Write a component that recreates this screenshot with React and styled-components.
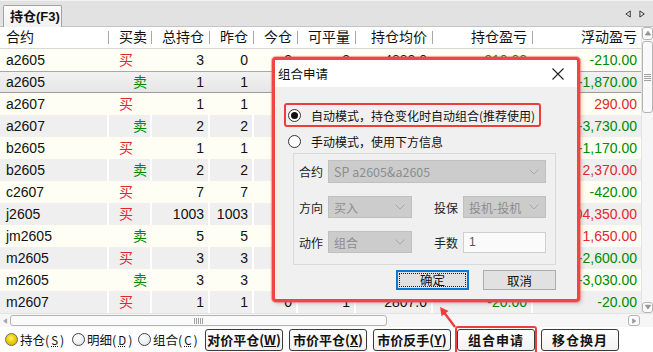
import React from "react";
import styled, { createGlobalStyle } from "styled-components";

const GlobalStyle = createGlobalStyle`
  html, body { margin: 0; padding: 0; background: #fff; }
  body { font-family: "Liberation Sans", "Noto Sans CJK SC", sans-serif; }
  * { box-sizing: border-box; }
`;

const COLS = "109px 43px 58px 44px 44px 58px 77px 100px 108px";
const RED = "#e0282f";
const GREEN = "#008a00";

const columns = [
  { label: "合约", align: "left" },
  { label: "买卖", align: "left" },
  { label: "总持仓", align: "right" },
  { label: "昨仓", align: "right" },
  { label: "今仓", align: "right" },
  { label: "可平量", align: "right" },
  { label: "持仓均价", align: "right" },
  { label: "持仓盈亏", align: "right" },
  { label: "浮动盈亏", align: "right" },
];

// contract, side, total, yesterday, today, closable, avg price, pos P/L, float P/L
const rows = [
  ["a2605", "买", "3", "0", "3", "3", "4880.0", "-210.00", "-210.00"],
  ["a2605", "卖", "1", "1", "0", "1", "4873.0", "-1,870.00", "-1,870.00"],
  ["a2607", "买", "1", "1", "0", "1", "4790.0", "290.00", "290.00"],
  ["a2607", "卖", "2", "2", "0", "2", "4712.0", "-3,730.00", "-3,730.00"],
  ["b2605", "买", "1", "1", "0", "1", "3633.0", "-1,170.00", "-1,170.00"],
  ["b2605", "卖", "2", "2", "0", "2", "3685.0", "2,370.00", "2,370.00"],
  ["c2607", "买", "7", "7", "0", "7", "2286.0", "-420.00", "-420.00"],
  ["j2605", "买", "1003", "1003", "0", "1003", "1744.5", "104,350.00", "104,350.00"],
  ["jm2605", "卖", "5", "5", "0", "5", "1153.0", "1,650.00", "1,650.00"],
  ["m2605", "买", "3", "3", "0", "3", "2972.0", "-2,600.00", "-2,600.00"],
  ["m2605", "卖", "3", "3", "0", "3", "2950.0", "-3,030.00", "-3,030.00"],
  ["m2607", "买", "1", "1", "0", "1", "2807.0", "-20.00", "-20.00"],
];

const Page = styled.div`
  position: relative;
  width: 653px;
  height: 352px;
  overflow: hidden;
  display: flex;
  flex-direction: column;
  background: #fff;
  color: #111;
  font-size: 14px;
`;

const TabBar = styled.div`
  flex: none;
  height: 27px;
  display: flex;
  align-items: flex-end;
  padding-left: 3px;
  background: #e2e2e2;
  border-top: 1px solid #f2f2f2;
  border-bottom: 1px solid #c4c4c4;
`;

const Tab = styled.div`
  width: 59px;
  height: 22px;
  margin-bottom: -1px;
  padding-left: 6px;
  border: 1px solid #a2a2a2;
  border-bottom: none;
  border-radius: 2px 2px 0 0;
  background: linear-gradient(#fdfdfd, #f1f1f1);
  font-weight: bold;
  font-size: 13px;
  line-height: 21px;
`;

const TabArrows = styled.div`
  margin-left: auto;
  align-self: center;
  display: flex;
  gap: 7px;
  padding-right: 7px;
`;

const TableWrap = styled.div`
  flex: none;
  height: 286px;
  display: flex;
`;

const Table = styled.div`
  flex: 1;
  display: flex;
  flex-direction: column;
`;

const HeaderRow = styled.div`
  display: grid;
  grid-template-columns: ${COLS};
  height: 22px;
  background: #fff;
  border-bottom: 1px solid #d8d8d8;
`;

const HeadCell = styled.div`
  line-height: 21px;
  white-space: nowrap;
  text-align: ${(p) => p.$align};
  padding: ${(p) => (p.$align === "left" ? (p.$side ? "0 0 0 10px" : "0 0 0 6px") : p.$last ? "0 4px 0 0" : "0 6px 0 0")};
  background: ${(p) =>
    p.$last ? "none" : "linear-gradient(#a9a9a9, #a9a9a9) right center / 1px 13px no-repeat"};
`;

const Row = styled.div`
  display: grid;
  grid-template-columns: ${COLS};
  height: 22px;
  background: ${(p) => (p.$selected ? "linear-gradient(#f2f2f2, #e6e6e6)" : p.$alt ? "#efefef" : "#fefef4")};
  border-top: ${(p) => (p.$selected ? "1px solid #a9a9a9" : "none")};
  border-bottom: ${(p) => (p.$selected ? "1px solid #9c9c9c" : "none")};
`;

const Cell = styled.div`
  line-height: ${(p) => (p.$selected ? "20px" : "22px")};
  white-space: nowrap;
  overflow: hidden;
  color: ${(p) => p.$color || "#111"};
  text-align: ${(p) => p.$align};
  padding: ${(p) => p.$pad};
  border-right: ${(p) => (p.$grid ? "2px solid #fff" : "none")};
`;

const VScroll = styled.div`
  width: 12px;
  display: flex;
  flex-direction: column;
  background: #f6f6f6;
  border-left: 1px solid #e4e4e4;
`;

const ScrollBtn = styled.div`
  flex: none;
  width: ${(p) => p.$w || "11px"};
  height: ${(p) => p.$h || "12px"};
  display: flex;
  align-items: center;
  justify-content: center;
  border: 1px solid ${(p) => (p.$plain ? "transparent" : "#b4b4b4")};
  border-radius: 3px;
  background: ${(p) => (p.$plain ? "transparent" : "#fbfbfb")};
`;

const VThumb = styled.div`
  flex: none;
  height: 72px;
  width: 11px;
  margin-top: 1px;
  border: 1px solid #b4b4b4;
  border-radius: 3px;
  background: #f9f9f9;
  display: flex;
  align-items: center;
  justify-content: center;
`;

const Spacer = styled.div`
  flex: 1;
`;

const HScroll = styled.div`
  flex: none;
  height: 14px;
  display: flex;
  align-items: center;
  background: #f6f6f6;
  border-top: 1px solid #e4e4e4;
`;

const HTrack = styled.div`
  width: 641px;
  display: flex;
  align-items: center;
  padding-right: 1px;
`;

const HThumb = styled.div`
  width: 377px;
  height: 11px;
  border: 1px solid #b4b4b4;
  border-radius: 3px;
  background: #fafafa;
  display: flex;
  align-items: center;
  justify-content: center;
`;

const BottomBar = styled.div`
  flex: none;
  height: 25px;
  display: flex;
  align-items: center;
  padding-left: 5px;
  font-family: "Noto Sans CJK SC", "Liberation Sans", sans-serif;
  font-size: 12.5px;
  background: #fff;
`;

const RadioItem = styled.label`
  flex: none;
  width: ${(p) => p.$w};
  display: flex;
  align-items: center;
  gap: 2px;
  line-height: 16px;
  color: #111;
  white-space: nowrap;
`;

const RadioDot = styled.span`
  flex: none;
  width: 13px;
  height: 13px;
  border-radius: 50%;
  border: 1px solid ${(p) => (p.$yellow ? "#6b6b6b" : "#444")};
  background: ${(p) =>
    p.$yellow
      ? "radial-gradient(circle at 45% 40%, #fff27a 0, #f0d000 45%, #c9a400 100%)"
      : p.$light
      ? "radial-gradient(circle at 40% 35%, #ffffff 0, #e8eef4 60%, #c9d3dc 100%)"
      : "#fff"};
  display: flex;
  align-items: center;
  justify-content: center;
`;

const Inner = styled.span`
  width: 7px;
  height: 7px;
  border-radius: 50%;
  background: #111;
`;

const Key = styled.span`
  text-decoration: underline dotted;
  text-underline-offset: 1px;
  font-size: 11.5px;
`;

const Buttons = styled.div`
  display: flex;
  align-items: center;
  gap: 6px;
`;

const BarButton = styled.div`
  width: 78px;
  height: 22px;
  border: 1px solid #3a3a3a;
  border-radius: 3px;
  background: linear-gradient(#ffffff, #f1f1f1);
  font-weight: bold;
  font-size: 13px;
  line-height: 20px;
  text-align: center;
  white-space: nowrap;
  letter-spacing: ${(p) => (p.$wide ? "1px" : "0")};
`;

const Highlight = styled.div`
  margin: 0 -2px;
  padding: 1px 0;
  border: 2px solid #ee3d3d;
  border-radius: 3px;
`;

/* ---- dialog ---- */

const DialogFrame = styled.div`
  position: absolute;
  left: 272px;
  top: 57px;
  width: 308px;
  height: 245px;
  display: flex;
  flex-direction: column;
  border: 3px solid #ef4545;
  border-radius: 4px;
  box-shadow: 0 0 1px 1px rgba(240, 80, 80, 0.5), 2px 2px 4px rgba(0, 0, 0, 0.15);
  background: #f0f0f0;
  font-family: "Noto Sans CJK SC", "Liberation Sans", sans-serif;
  font-size: 12px;
  color: #111;
`;

const TitleBar = styled.div`
  flex: none;
  height: 27px;
  display: flex;
  align-items: center;
  justify-content: space-between;
  padding: 0 13px 0 3px;
  background: #fff;
  font-size: 12.5px;
`;

const DialogBody = styled.div`
  flex: 1;
  display: flex;
  flex-direction: column;
  align-items: flex-start;
  padding: 16px 21px 0 9px;
`;

const ModeBox = styled.div`
  width: 257px;
  height: 24px;
  display: flex;
  align-items: center;
  gap: 10px;
  padding-left: 2px;
  border: 2px solid #ee3d3d;
  border-radius: 3px;
`;

const ModeRow = styled.div`
  height: 16px;
  margin-top: 6px;
  padding-left: 4px;
  display: flex;
  align-items: center;
  gap: 10px;
`;

const DlgRadio = styled.span`
  flex: none;
  width: 13px;
  height: 13px;
  border-radius: 50%;
  border: 1px solid #333;
  background: #fff;
  display: flex;
  align-items: center;
  justify-content: center;
`;

const Group = styled.div`
  width: 263px;
  height: 112px;
  margin: 4px 0 0 9px;
  padding: 6px 10px 0 4px;
  border: 1px solid #d9d9d9;
  display: grid;
  grid-template-columns: 30px 84px 21px 30px 83px;
  grid-template-rows: 23px 22px 22px;
  row-gap: 13px;
  align-items: center;
`;

const FieldLabel = styled.span`
  grid-column: ${(p) => p.$col};
  padding-left: 1px;
  color: #222;
`;

const Select = styled.div`
  grid-column: ${(p) => p.$span || "auto"};
  height: 100%;
  display: flex;
  align-items: center;
  justify-content: space-between;
  padding: 0 6px 0 5px;
  background: #cccccc;
  border: 1px solid #c0c0c0;
  color: #8c8c8c;
  white-space: nowrap;
  font-size: ${(p) => (p.$latin ? "12.5px" : "12px")};
`;

const Input = styled.div`
  grid-column: 5;
  height: 21px;
  padding-left: 5px;
  border: 1px solid #cfcfcf;
  background: #fafafa;
  color: #555;
  line-height: 19px;
  font-family: "Liberation Sans", sans-serif;
`;

const DlgButtons = styled.div`
  align-self: flex-end;
  display: flex;
  gap: 14px;
  margin-top: 5px;
`;

const DlgButton = styled.div`
  width: 73px;
  height: 20px;
  display: flex;
  align-items: center;
  justify-content: center;
  background: #e1e1e1;
  border: ${(p) => (p.$primary ? "2px solid #0a78d7" : "1px solid #adadad")};
  font-size: 12.5px;
`;

const Focus = styled.span`
  flex: 1;
  align-self: stretch;
  margin: 1px;
  outline: 1px dotted #222;
  outline-offset: -1px;
  text-align: center;
  line-height: 14px;
`;

const Arrow = styled.svg`
  position: absolute;
  left: 432px;
  top: 300px;
`;

const Chevron = () => (
  <svg width="10" height="6" viewBox="0 0 10 6">
    <polyline points="0.5,0.5 5,5 9.5,0.5" fill="none" stroke="#a8a8a8" strokeWidth="1" />
  </svg>
);

const Tri = ({ dir, size = 7, fill = "none", stroke = "#222" }) => {
  const pts = {
    left: "6,0.5 1,4 6,7.5",
    right: "1,0.5 6,4 1,7.5",
    up: "0.5,6 4,1 7.5,6",
    down: "0.5,1 4,6 7.5,1",
  }[dir];
  return (
    <svg width={size} height={size + 1} viewBox="0 0 8 8">
      <polygon points={pts} fill={fill} stroke={stroke} strokeWidth="1" />
    </svg>
  );
};

const Grip = ({ vertical }) =>
  vertical ? (
    <svg width="7" height="7" viewBox="0 0 7 7">
      {[0.5, 2.5, 4.5, 6.5].map((y) => (
        <line key={y} x1="0" x2="7" y1={y} y2={y} stroke="#a0a0a0" strokeWidth="1" />
      ))}
    </svg>
  ) : (
    <svg width="9" height="6" viewBox="0 0 9 6">
      {[0.5, 2.5, 4.5, 6.5, 8.5].map((x) => (
        <line key={x} y1="0" y2="6" x1={x} x2={x} stroke="#a0a0a0" strokeWidth="1" />
      ))}
    </svg>
  );

const numColor = (v) => (v.startsWith("-") ? GREEN : RED);

const cellProps = (row, ci, grid) => {
  const v = row[ci];
  const last = ci === 8;
  if (ci === 0) return { $align: "left", $pad: "0 0 0 6px" };
  if (ci === 1)
    return { $align: "left", $pad: v === "买" ? "0 0 0 10px" : "0 0 0 24px", $color: v === "买" ? RED : GREEN };
  return {
    $align: "right",
    $pad: last ? "0 4px 0 0" : grid ? "0 4px 0 0" : "0 6px 0 0",
    $color: ci >= 7 ? numColor(v) : undefined,
  };
};

export default function App() {
  return (
    <>
      <GlobalStyle />
      <Page>
        <TabBar>
          <Tab>持仓(F3)</Tab>
          <TabArrows>
            <Tri dir="left" />
            <Tri dir="right" />
          </TabArrows>
        </TabBar>

        <TableWrap>
          <Table>
            <HeaderRow>
              {columns.map((c, i) => (
                <HeadCell key={c.label} $align={c.align} $side={i === 1} $last={i === 8}>
                  {c.label}
                </HeadCell>
              ))}
            </HeaderRow>
            {rows.map((r, ri) => {
              const selected = ri === 1;
              const alt = ri % 2 === 1;
              const grid = alt && !selected;
              return (
                <Row key={ri} $selected={selected} $alt={alt}>
                  {r.map((v, ci) => (
                    <Cell key={ci} $selected={selected} $grid={grid && ci < 8} {...cellProps(r, ci, grid)}>
                      {v}
                    </Cell>
                  ))}
                </Row>
              );
            })}
          </Table>
          <VScroll>
            <ScrollBtn $h="13px">
              <Tri dir="up" size={6} fill="#9a9a9a" stroke="#8a8a8a" />
            </ScrollBtn>
            <VThumb>
              <Grip vertical />
            </VThumb>
            <Spacer />
            <ScrollBtn $h="11px">
              <Tri dir="down" size={6} fill="#9a9a9a" stroke="#8a8a8a" />
            </ScrollBtn>
          </VScroll>
        </TableWrap>

        <HScroll>
          <HTrack>
            <ScrollBtn $plain $w="10px">
              <Tri dir="left" size={5} fill="#a0a0a0" stroke="#a0a0a0" />
            </ScrollBtn>
            <HThumb>
              <Grip />
            </HThumb>
            <Spacer />
            <ScrollBtn $w="12px" $h="11px">
              <Tri dir="right" size={5} fill="#9a9a9a" stroke="#8a8a8a" />
            </ScrollBtn>
          </HTrack>
        </HScroll>

        <BottomBar>
          <RadioItem $w="67px">
            <RadioDot $yellow />
            持仓(<Key>S</Key>)
          </RadioItem>
          <RadioItem $w="66px">
            <RadioDot $light />
            明细(<Key>D</Key>)
          </RadioItem>
          <RadioItem $w="67px">
            <RadioDot $light />
            组合(<Key>C</Key>)
          </RadioItem>
          <Buttons>
            <BarButton>对价平仓(<u>W</u>)</BarButton>
            <BarButton>市价平仓(<u>X</u>)</BarButton>
            <BarButton>市价反手(<u>Y</u>)</BarButton>
            <Highlight>
              <BarButton $wide>组合申请</BarButton>
            </Highlight>
            <BarButton $wide>移仓换月</BarButton>
          </Buttons>
        </BottomBar>

        <DialogFrame>
          <TitleBar>
            <span>组合申请</span>
            <svg width="12" height="12" viewBox="0 0 12 12">
              <path d="M0.5 0.5 L11.5 11.5 M11.5 0.5 L0.5 11.5" stroke="#222" strokeWidth="1.1" />
            </svg>
          </TitleBar>
          <DialogBody>
            <ModeBox>
              <DlgRadio>
                <Inner />
              </DlgRadio>
              自动模式，持仓变化时自动组合(推荐使用)
            </ModeBox>
            <ModeRow>
              <DlgRadio />
              手动模式，使用下方信息
            </ModeRow>
            <Group>
              <FieldLabel $col="1">合约</FieldLabel>
              <Select $span="2 / 6" $latin>
                SP a2605&amp;a2605
                <Chevron />
              </Select>
              <FieldLabel $col="1">方向</FieldLabel>
              <Select>
                买入
                <Chevron />
              </Select>
              <FieldLabel $col="4">投保</FieldLabel>
              <Select>
                投机-投机
                <Chevron />
              </Select>
              <FieldLabel $col="1">动作</FieldLabel>
              <Select>
                组合
                <Chevron />
              </Select>
              <FieldLabel $col="4">手数</FieldLabel>
              <Input>1</Input>
            </Group>
            <DlgButtons>
              <DlgButton $primary>
                <Focus>确定</Focus>
              </DlgButton>
              <DlgButton>取消</DlgButton>
            </DlgButtons>
          </DialogBody>
        </DialogFrame>

        <Arrow width="28" height="30" viewBox="0 0 28 30">
          <line x1="23" y1="27" x2="12.5" y2="13" stroke="#ee3d3d" strokeWidth="2.4" />
          <polygon points="8,7 16.5,11 9.6,16.2" fill="#ee3d3d" />
        </Arrow>
      </Page>
    </>
  );
}
